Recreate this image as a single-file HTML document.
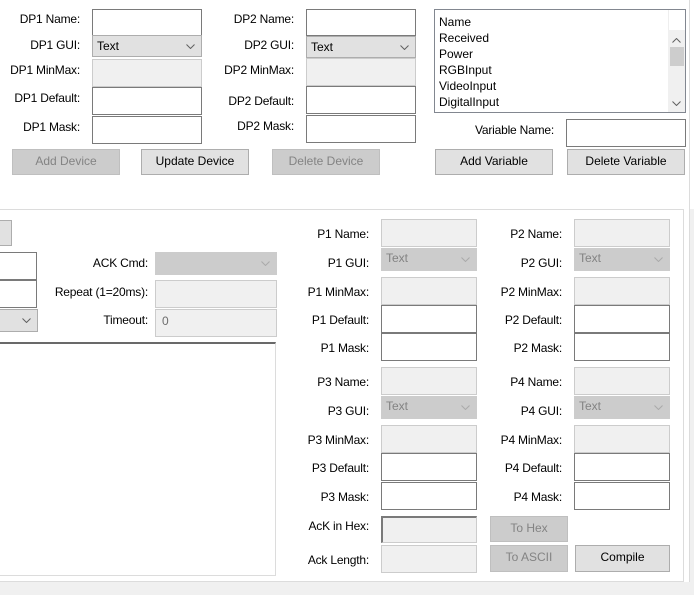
<!DOCTYPE html>
<html><head><style>
body{margin:0;width:694px;height:595px;background:#f0f0f0;position:relative;overflow:hidden;font-family:"Liberation Sans",sans-serif;font-size:12px;color:#000}
div{position:absolute;box-sizing:border-box}
.l{text-align:right;white-space:nowrap;line-height:14px;letter-spacing:-0.2px}
.i{background:#fff;border:1px solid #7a7a7a}
.d{background:#f0f0f0;border:1px solid #ccc}
.c{background:#e1e1e1;border:1px solid #adadad;padding:3px 0 0 4px}
.cd{background:#ccc;border:1px solid #ccc;padding:2px 0 0 4px;color:#838383}
.b{background:#e1e1e1;border:1px solid #adadad;text-align:center;line-height:23px}
.bd{background:#ccc;border:1px solid #bfbfbf;text-align:center;line-height:23px;color:#838383}
svg.ar{position:absolute;right:6px;top:8px}
</style></head><body>
<div style="left:0;top:0;width:694px;height:209px;background:#fff"></div>
<div style="left:0;top:209px;width:684px;height:373px;background:#fff;border-top:1px solid #dcdcdc;border-right:1px solid #dcdcdc;border-bottom:1px solid #dcdcdc"></div>
<div style="left:684px;top:209px;width:6px;height:373px;background:#fff"></div>
<div style="left:689px;top:0;width:1px;height:582px;background:#dcdcdc"></div>

<!-- DP1 -->
<div class="l" style="left:0;width:80px;top:12px">DP1 Name:</div>
<div class="l" style="left:0;width:80px;top:38px">DP1 GUI:</div>
<div class="l" style="left:0;width:80px;top:63px">DP1 MinMax:</div>
<div class="l" style="left:0;width:80px;top:91px">DP1 Default:</div>
<div class="l" style="left:0;width:80px;top:120px">DP1 Mask:</div>
<div class="i" style="left:92px;top:9px;width:110px;height:27px"></div>
<div class="c" style="left:92px;top:35px;width:110px;height:22px">Text<svg class="ar" width="9" height="5"><path d="M0.5 0.5L4.5 4.5L8.5 0.5" fill="none" stroke="#606060"/></svg></div>
<div class="d" style="left:92px;top:59px;width:110px;height:28px"></div>
<div class="i" style="left:92px;top:87px;width:110px;height:28px"></div>
<div class="i" style="left:92px;top:116px;width:110px;height:28px"></div>
<!-- DP2 -->
<div class="l" style="left:200px;width:94px;top:12px">DP2 Name:</div>
<div class="l" style="left:200px;width:94px;top:38px">DP2 GUI:</div>
<div class="l" style="left:200px;width:94px;top:63px">DP2 MinMax:</div>
<div class="l" style="left:200px;width:94px;top:94px">DP2 Default:</div>
<div class="l" style="left:200px;width:94px;top:119px">DP2 Mask:</div>
<div class="i" style="left:306px;top:9px;width:110px;height:27px"></div>
<div class="c" style="left:306px;top:36px;width:110px;height:22px">Text<svg class="ar" width="9" height="5"><path d="M0.5 0.5L4.5 4.5L8.5 0.5" fill="none" stroke="#606060"/></svg></div>
<div class="d" style="left:306px;top:58px;width:110px;height:28px"></div>
<div class="i" style="left:306px;top:86px;width:110px;height:28px"></div>
<div class="i" style="left:306px;top:115px;width:110px;height:28px"></div>
<div class="bd" style="left:12px;top:149px;width:108px;height:26px">Add Device</div>
<div class="b" style="left:141px;top:149px;width:108px;height:26px">Update Device</div>
<div class="bd" style="left:272px;top:149px;width:108px;height:26px">Delete Device</div>

<!-- listbox -->
<div class="i" style="left:434px;top:9px;width:252px;height:104px;border-color:#828790">
 <div style="left:4px;top:4px;line-height:16px">Name<br>Received<br>Power<br>RGBInput<br>VideoInput<br>DigitalInput</div>
 <div style="left:233px;top:0;width:17px;height:20px;background:#fff;border-left:1px solid #eee"></div>
 <div style="left:233px;top:20px;width:17px;height:82px;background:#f0f0f0"></div>
 <svg style="position:absolute;left:237px;top:28px" width="9" height="5"><path d="M0.5 4.5L4.5 0.5L8.5 4.5" fill="none" stroke="#606060"/></svg>
 <div style="left:235px;top:37px;width:14px;height:19px;background:#cdcdcd"></div>
 <svg style="position:absolute;left:237px;top:91px" width="9" height="5"><path d="M0.5 0.5L4.5 4.5L8.5 0.5" fill="none" stroke="#606060"/></svg>
</div>
<div class="l" style="left:440px;width:114px;top:123px">Variable Name:</div>
<div class="i" style="left:566px;top:119px;width:120px;height:28px"></div>
<div class="b" style="left:435px;top:149px;width:118px;height:26px">Add Variable</div>
<div class="b" style="left:567px;top:149px;width:118px;height:26px">Delete Variable</div>

<!-- lower left -->
<div class="b" style="left:-10px;top:220px;width:22px;height:26px"></div>
<div class="i" style="left:-2px;top:252px;width:39px;height:28px"></div>
<div class="i" style="left:-2px;top:280px;width:39px;height:28px"></div>
<div class="c" style="left:-2px;top:309px;width:40px;height:23px"><svg class="ar" width="9" height="5"><path d="M0.5 0.5L4.5 4.5L8.5 0.5" fill="none" stroke="#606060"/></svg></div>
<div class="l" style="left:60px;width:88px;top:256px">ACK Cmd:</div>
<div class="l" style="left:40px;width:108px;top:285px">Repeat (1=20ms):</div>
<div class="l" style="left:60px;width:88px;top:313px">Timeout:</div>
<div class="cd" style="left:155px;top:252px;width:122px;height:23px"><svg class="ar" width="9" height="5"><path d="M0.5 0.5L4.5 4.5L8.5 0.5" fill="none" stroke="#aaa"/></svg></div>
<div class="d" style="left:155px;top:280px;width:122px;height:28px"></div>
<div class="d" style="left:155px;top:309px;width:122px;height:28px;padding:4px 0 0 6px;color:#6d6d6d">0</div>
<div style="left:-2px;top:342px;width:278px;height:234px;background:#fff;border:1px solid #dcdcdc;border-top:2px solid #696969"></div>

<!-- P fields -->
<div class="l" style="left:280px;width:89px;top:227px">P1 Name:</div>
<div class="l" style="left:280px;width:89px;top:256px">P1 GUI:</div>
<div class="l" style="left:280px;width:89px;top:285px">P1 MinMax:</div>
<div class="l" style="left:280px;width:89px;top:313px">P1 Default:</div>
<div class="l" style="left:280px;width:89px;top:341px">P1 Mask:</div>
<div class="d" style="left:381px;top:219px;width:96px;height:28px"></div>
<div class="cd" style="left:381px;top:248px;width:96px;height:23px">Text<svg class="ar" width="9" height="5"><path d="M0.5 0.5L4.5 4.5L8.5 0.5" fill="none" stroke="#aaa"/></svg></div>
<div class="d" style="left:381px;top:277px;width:96px;height:28px"></div>
<div class="i" style="left:381px;top:305px;width:96px;height:28px"></div>
<div class="i" style="left:381px;top:333px;width:96px;height:28px"></div>
<div class="l" style="left:470px;width:92px;top:227px">P2 Name:</div>
<div class="l" style="left:470px;width:92px;top:256px">P2 GUI:</div>
<div class="l" style="left:470px;width:92px;top:285px">P2 MinMax:</div>
<div class="l" style="left:470px;width:92px;top:313px">P2 Default:</div>
<div class="l" style="left:470px;width:92px;top:341px">P2 Mask:</div>
<div class="d" style="left:574px;top:219px;width:96px;height:28px"></div>
<div class="cd" style="left:574px;top:248px;width:96px;height:23px">Text<svg class="ar" width="9" height="5"><path d="M0.5 0.5L4.5 4.5L8.5 0.5" fill="none" stroke="#aaa"/></svg></div>
<div class="d" style="left:574px;top:277px;width:96px;height:28px"></div>
<div class="i" style="left:574px;top:305px;width:96px;height:28px"></div>
<div class="i" style="left:574px;top:333px;width:96px;height:28px"></div>

<div class="l" style="left:280px;width:89px;top:375px">P3 Name:</div>
<div class="l" style="left:280px;width:89px;top:404px">P3 GUI:</div>
<div class="l" style="left:280px;width:89px;top:433px">P3 MinMax:</div>
<div class="l" style="left:280px;width:89px;top:461px">P3 Default:</div>
<div class="l" style="left:280px;width:89px;top:490px">P3 Mask:</div>
<div class="d" style="left:381px;top:367px;width:96px;height:28px"></div>
<div class="cd" style="left:381px;top:396px;width:96px;height:23px">Text<svg class="ar" width="9" height="5"><path d="M0.5 0.5L4.5 4.5L8.5 0.5" fill="none" stroke="#aaa"/></svg></div>
<div class="d" style="left:381px;top:425px;width:96px;height:28px"></div>
<div class="i" style="left:381px;top:453px;width:96px;height:28px"></div>
<div class="i" style="left:381px;top:482px;width:96px;height:28px"></div>
<div class="l" style="left:470px;width:92px;top:375px">P4 Name:</div>
<div class="l" style="left:470px;width:92px;top:404px">P4 GUI:</div>
<div class="l" style="left:470px;width:92px;top:433px">P4 MinMax:</div>
<div class="l" style="left:470px;width:92px;top:461px">P4 Default:</div>
<div class="l" style="left:470px;width:92px;top:490px">P4 Mask:</div>
<div class="d" style="left:574px;top:367px;width:96px;height:28px"></div>
<div class="cd" style="left:574px;top:396px;width:96px;height:23px">Text<svg class="ar" width="9" height="5"><path d="M0.5 0.5L4.5 4.5L8.5 0.5" fill="none" stroke="#aaa"/></svg></div>
<div class="d" style="left:574px;top:425px;width:96px;height:28px"></div>
<div class="i" style="left:574px;top:453px;width:96px;height:28px"></div>
<div class="i" style="left:574px;top:482px;width:96px;height:28px"></div>

<div class="l" style="left:280px;width:89px;top:519px">AcK in Hex:</div>
<div class="l" style="left:280px;width:89px;top:553px">Ack Length:</div>
<div class="d" style="left:381px;top:516px;width:96px;height:27px;border-color:#7a7a7a #ccc #ccc #7a7a7a;border-width:2px 1px 1px 2px"></div>
<div class="d" style="left:381px;top:545px;width:96px;height:28px"></div>
<div class="bd" style="left:490px;top:516px;width:78px;height:26px">To Hex</div>
<div class="bd" style="left:490px;top:545px;width:78px;height:27px">To ASCII</div>
<div class="b" style="left:575px;top:545px;width:95px;height:27px">Compile</div>
</body></html>
